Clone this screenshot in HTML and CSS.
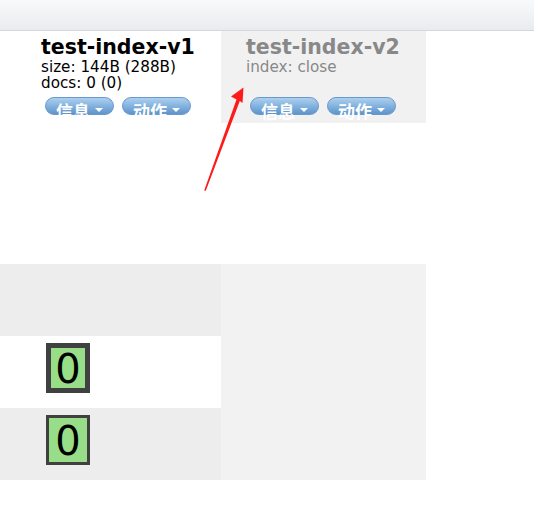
FILE: index.html
```html
<!DOCTYPE html>
<html>
<head>
<meta charset="utf-8">
<link rel="stylesheet" href="styles.css">
</head>
<body>
<div class="topbar"></div>
<div class="header">
  <div class="col col-open">
    <div class="info">
      <div class="name">test-index-v1</div>
      <div class="meta">size: 144B (288B)</div>
      <div class="meta">docs: 0 (0)</div>
    </div>
    <div class="actions">
      <div class="btn"><span class="btn-label">信息</span><span class="caret"></span></div>
      <div class="btn"><span class="btn-label">动作</span><span class="caret"></span></div>
    </div>
  </div>
  <div class="col col-closed">
    <div class="info">
      <div class="name">test-index-v2</div>
      <div class="meta">index: close</div>
    </div>
    <div class="actions">
      <div class="btn"><span class="btn-label">信息</span><span class="caret"></span></div>
      <div class="btn"><span class="btn-label">动作</span><span class="caret"></span></div>
    </div>
  </div>
</div>
<div class="spacer"></div>
<div class="grid">
  <div class="cell row-odd"></div>
  <div class="cell-closed"></div>
  <div class="cell row-even"><div class="badge badge-thick">0</div></div>
  <div class="cell row-odd"><div class="badge badge-thin">0</div></div>
</div>
<svg class="arrow" width="534" height="516" viewBox="0 0 534 516">
  <polygon points="243.5,87.5 231,96.5 236.5,99.5 204.2,190.5 205.8,190.8 239.8,101 242.5,103" fill="#ff1a1a"/>
</svg>
</body>
</html>
```
FILE: styles.css
```css
html, body {
  margin: 0;
  padding: 0;
  background: #ffffff;
}
body {
  position: relative;
  width: 534px;
  height: 516px;
  overflow: hidden;
  font-family: "DejaVu Sans", Verdana, sans-serif;
}
.topbar {
  height: 30px;
  border-bottom: 1px solid #d3d8dc;
  background: linear-gradient(to bottom, #f8f9fa, #e9ecee);
}
.header {
  display: flex;
  height: 92px;
}
.col {
  box-sizing: border-box;
  padding-top: 4px;
}
.col-open {
  width: 221px;
  padding-left: 41px;
  color: #000;
}
.col-closed {
  width: 205px;
  padding-left: 25px;
  background: #f1f1f1;
  color: #888888;
}
.info {
  height: 56px;
}
.name {
  font-size: 20.5px;
  font-weight: bold;
  line-height: 24px;
  white-space: nowrap;
}
.meta {
  font-size: 15.2px;
  line-height: 16px;
  white-space: nowrap;
}
.actions {
  display: flex;
  gap: 8px;
  margin-top: 6px;
  margin-left: 4px;
}
.btn {
  box-sizing: border-box;
  width: 69px;
  height: 18px;
  border: 1px solid #6b98cb;
  border-radius: 10px;
  background: linear-gradient(to bottom, #acd0f0, #5d95cc);
  display: flex;
  align-items: flex-start;
  padding-left: 10px;
  overflow: visible;
}
.btn-label {
  font-family: "Noto Sans CJK SC", sans-serif;
  font-weight: bold;
  font-size: 17px;
  line-height: 17px;
  color: #ffffff;
  margin-top: 4px;
  white-space: nowrap;
}
.caret {
  width: 0;
  height: 0;
  border-left: 4px solid transparent;
  border-right: 4px solid transparent;
  border-top: 4px solid #ffffff;
  margin-left: 5px;
  margin-top: 10px;
}
.spacer {
  height: 141px;
}
.grid {
  display: grid;
  grid-template-columns: 221px 205px;
  grid-template-rows: 72px 72px 72px;
}
.cell {
  grid-column: 1;
  padding-left: 46px;
  padding-top: 7px;
  box-sizing: border-box;
}
.cell-closed {
  grid-column: 2;
  grid-row: 1 / 4;
  background: #f2f2f2;
}
.row-odd {
  background: #ededed;
}
.row-even {
  background: #ffffff;
}
.badge {
  box-sizing: border-box;
  width: 44px;
  height: 50px;
  border-style: solid;
  border-color: #404040;
  background: #98dd87;
  color: #000;
  font-family: "DejaVu Sans", sans-serif;
  font-size: 40px;
  text-align: center;
}
.badge-thick {
  border-width: 5px;
  line-height: 43px;
}
.badge-thin {
  border-width: 3px;
  line-height: 46px;
}
.arrow {
  position: absolute;
  left: 0;
  top: 0;
  pointer-events: none;
}
```
